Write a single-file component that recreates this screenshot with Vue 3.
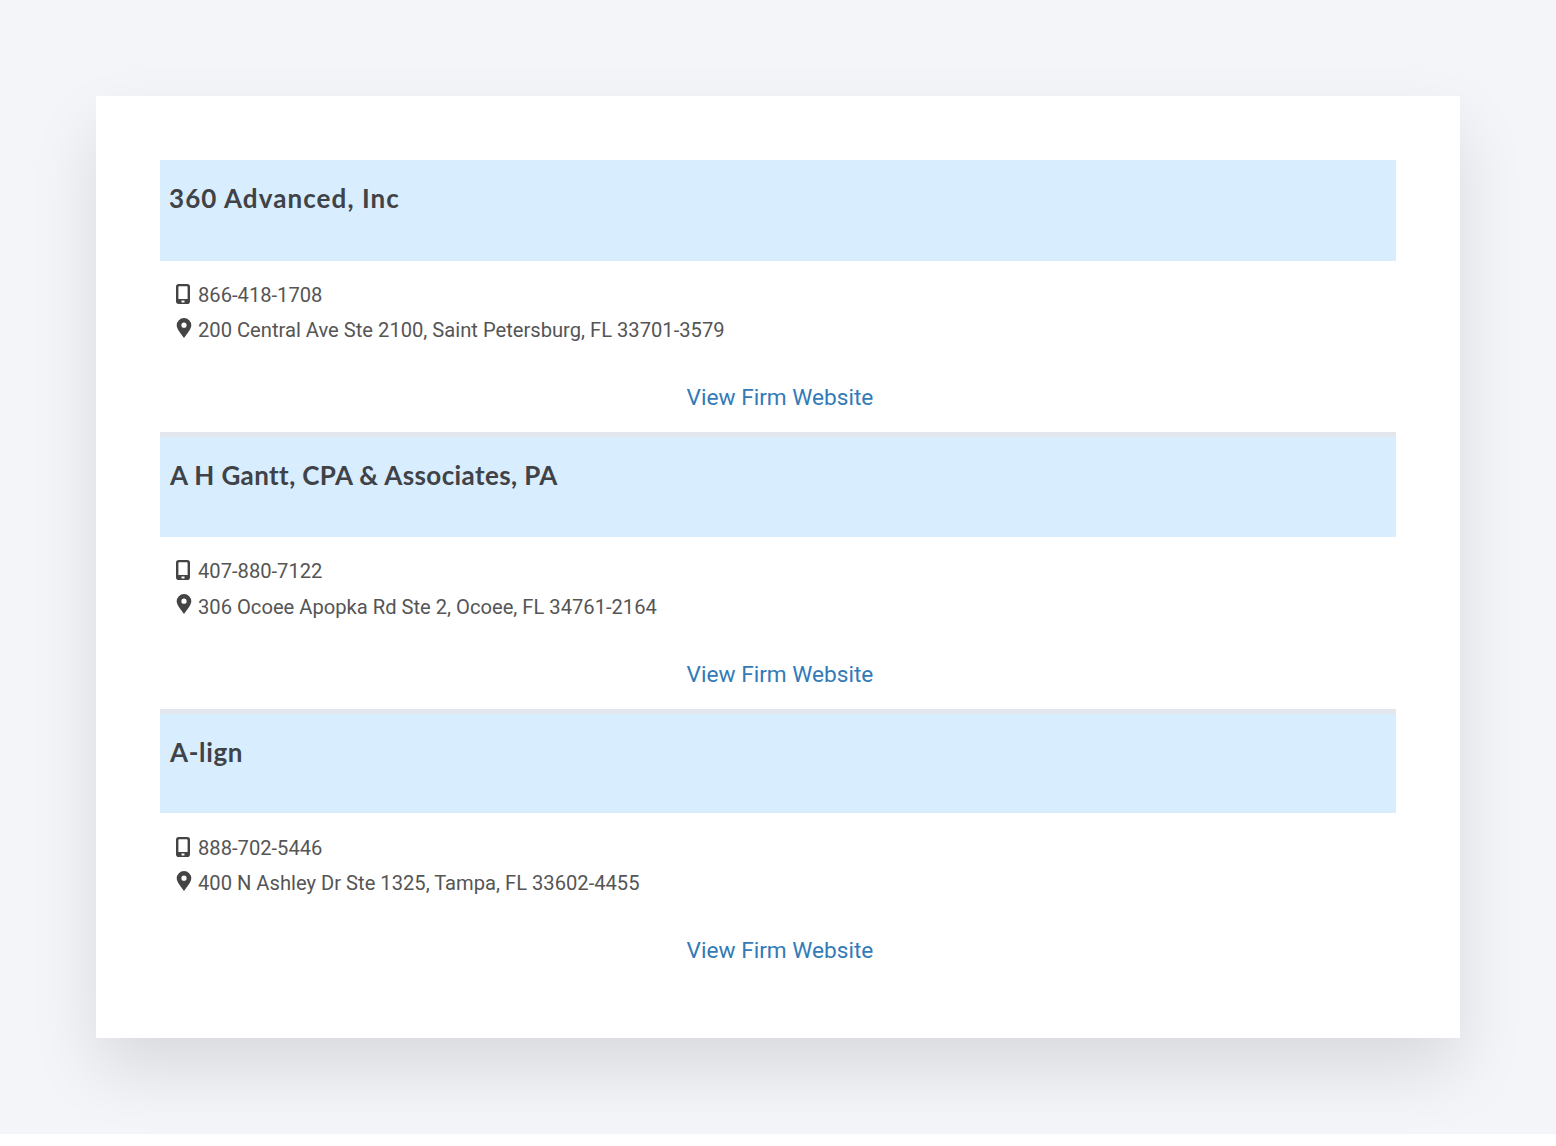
<script setup>
const firms = [
  { name: '360 Advanced, Inc', phone: '866-418-1708', address: '200 Central Ave Ste 2100, Saint Petersburg, FL 33701-3579' },
  { name: 'A H Gantt, CPA & Associates, PA', phone: '407-880-7122', address: '306 Ocoee Apopka Rd Ste 2, Ocoee, FL 34761-2164' },
  { name: 'A-lign', phone: '888-702-5446', address: '400 N Ashley Dr Ste 1325, Tampa, FL 33602-4455' }
]
</script>

<template>
  <main class="page">
    <section class="card">
      <article v-for="firm in firms" :key="firm.name" class="firm">
        <h2 class="name">{{ firm.name }}</h2>
        <div class="details">
          <p class="row">
            <svg class="icon" viewBox="0 0 16 20" width="16" height="20">
              <path fill="#444" fill-rule="evenodd" d="M2.800 0h8.400A2.800 2.800 0 0 1 14 2.800v14.400a2.800 2.800 0 0 1-2.800 2.800H2.800A2.800 2.800 0 0 1 0 17.200V2.800A2.800 2.800 0 0 1 2.800 0zM2.400 3v12h9.200V3a.8.8 0 0 0-.8-.8H3.200a.8.8 0 0 0-.8.8zM5.500 16.400v2h3v-2z"/>
            </svg>
            <span>{{ firm.phone }}</span>
          </p>
          <p class="row">
            <svg class="icon pin" viewBox="0 0 16 20" width="16" height="20">
              <path fill="#444" fill-rule="evenodd" d="M8 0a7.300 7.300 0 0 1 7.300 7.300c0 4-4.500 8.700-7.300 12.700C5.200 16 .7 11.300.7 7.300A7.300 7.300 0 0 1 8 0zm0 4.600a2.600 2.600 0 1 0 0 5.200 2.600 2.600 0 0 0 0-5.200z"/>
            </svg>
            <span>{{ firm.address }}</span>
          </p>
        </div>
        <a class="link" href="#">View Firm Website</a>
      </article>
    </section>
  </main>
</template>

<style scoped>
.page {
  background: #f3f5f9;
  padding: 96px;
}
.card {
  background: #fff;
  padding: 64px;
  height: 942px;
  box-sizing: border-box;
  box-shadow: 0 32px 64px rgba(0, 0, 0, 0.11);
}
.firm {
  border-top: 5px solid #e3e6ec;
  height: 276.500px;
  box-sizing: border-box;
}
.firm:first-child {
  border-top: 0;
  height: 272px;
}
.name {
  margin: 0;
  height: 99.500px;
  box-sizing: border-box;
  background: #d8edfd;
  padding: 20px 10px 0;
  font: 700 26px/36px Lato, sans-serif;
  letter-spacing: 0.65px;
  color: #3f4246;
}
.firm:first-child .name {
  height: 101px;
  padding-left: 9px;
  letter-spacing: 1.08px;
}
.firm:nth-child(2) .name {
  letter-spacing: 0.38px;
}
.details {
  padding: 17px 16px 0;
}
.firm:first-child .details {
  padding-top: 16px;
}
.row {
  margin: 0;
  display: flex;
  align-items: center;
  gap: 6px;
  height: 35.500px;
  font: 400 20.170px/36px Roboto, sans-serif;
  color: #555;
}
.icon {
  flex: none;
  margin-top: -2px;
}
.icon.pin {
  margin-top: -5px;
}
.link {
  display: block;
  margin-top: 32px;
  margin-left: 4px;
  text-align: center;
  font: 400 22.650px/36px Roboto, sans-serif;
  color: #337ab7;
  text-decoration: none;
}
</style>

<style>
body { background: #fff; }
</style>
